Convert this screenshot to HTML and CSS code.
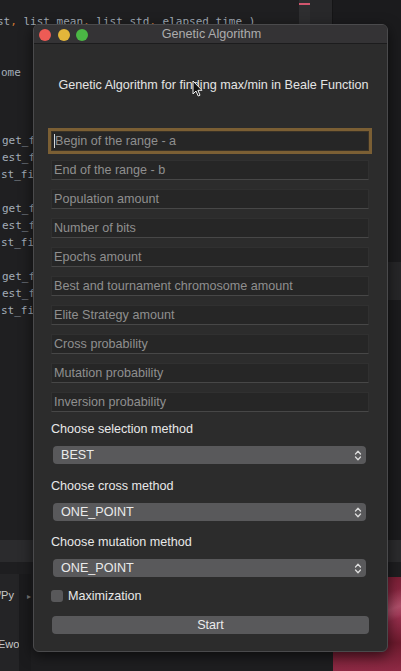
FILE: index.html
```html
<!DOCTYPE html>
<html>
<head>
<meta charset="utf-8">
<title>Genetic Algorithm</title>
<link rel="stylesheet" href="styles.css">
</head>
<body>
<div class="desktop">
  <div class="editor">
    <div class="code">
      <div class="ln l0">st<span class="op">,</span> list_mean<span class="op">,</span> list_std<span class="op">,</span> elapsed_time )</div>
      <div class="ln"></div>
      <div class="ln"></div>
      <div class="ln">ome</div>
      <div class="ln"></div>
      <div class="ln"></div>
      <div class="ln"></div>
      <div class="ln in">get_fitness</div>
      <div class="ln in">est_fitness</div>
      <div class="ln">st_fitness</div>
      <div class="ln"></div>
      <div class="ln in">get_fitness</div>
      <div class="ln in">est_fitness</div>
      <div class="ln">st_fitness</div>
      <div class="ln"></div>
      <div class="ln in">get_fitness</div>
      <div class="ln in">est_fitness</div>
      <div class="ln">st_fitness</div>
    </div>
    <div class="scroll"><div class="mark"></div></div>
    <div class="gutter"></div>
    <div class="side"><div class="side-block"></div></div>
  </div>
  <div class="statusband"></div>
  <div class="bottom">
    <div class="proj">
      <div class="proj-item">/Py</div>
      <div class="proj-item">Ewo</div>
    </div>
    <div class="proj-gap"><span class="tri">▸</span></div>
    <div class="spacer"></div>
    <div class="wallpaper"></div>
  </div>

  <div class="window">
    <div class="titlebar">
      <div class="lights">
        <span class="light red"></span>
        <span class="light yellow"></span>
        <span class="light green"></span>
      </div>
      <div class="title">Genetic Algorithm</div>
    </div>
    <div class="content">
      <div class="heading">Genetic Algorithm for finding max/min in Beale Function</div>
      <div class="fields">
        <div class="field focused"><span class="caret"></span><span class="ph">Begin of the range - a</span></div>
        <div class="field"><span class="ph">End of the range - b</span></div>
        <div class="field"><span class="ph">Population amount</span></div>
        <div class="field"><span class="ph">Number of bits</span></div>
        <div class="field"><span class="ph">Epochs amount</span></div>
        <div class="field"><span class="ph">Best and tournament chromosome amount</span></div>
        <div class="field"><span class="ph">Elite Strategy amount</span></div>
        <div class="field"><span class="ph">Cross probability</span></div>
        <div class="field"><span class="ph">Mutation probability</span></div>
        <div class="field"><span class="ph">Inversion probability</span></div>
      </div>
      <div class="label first">Choose selection method</div>
      <div class="combo">
        <span>BEST</span>
        <svg class="arrows" width="8" height="13" viewBox="0 0 8 13"><path d="M1.5 5 L4 2.3 L6.5 5 M1.5 8 L4 10.7 L6.5 8" fill="none" stroke="#dcdcdc" stroke-width="1.3" stroke-linecap="round" stroke-linejoin="round"/></svg>
      </div>
      <div class="label second">Choose cross method</div>
      <div class="combo">
        <span>ONE_POINT</span>
        <svg class="arrows" width="8" height="13" viewBox="0 0 8 13"><path d="M1.5 5 L4 2.3 L6.5 5 M1.5 8 L4 10.7 L6.5 8" fill="none" stroke="#dcdcdc" stroke-width="1.3" stroke-linecap="round" stroke-linejoin="round"/></svg>
      </div>
      <div class="label third">Choose mutation method</div>
      <div class="combo">
        <span>ONE_POINT</span>
        <svg class="arrows" width="8" height="13" viewBox="0 0 8 13"><path d="M1.5 5 L4 2.3 L6.5 5 M1.5 8 L4 10.7 L6.5 8" fill="none" stroke="#dcdcdc" stroke-width="1.3" stroke-linecap="round" stroke-linejoin="round"/></svg>
      </div>
      <div class="check-row">
        <span class="checkbox"></span>
        <span class="check-label">Maximization</span>
      </div>
      <div class="button">Start</div>
    </div>
    <svg class="cursor" width="12" height="17" viewBox="0 0 12 17"><path d="M1 1 L1 14 L4 11 L6.2 16 L8 15.2 L5.9 10.3 L10 10.3 Z" fill="#111" stroke="#f2f2f2" stroke-width="1" stroke-linejoin="round"/></svg>
  </div>
</div>
</body>
</html>
```

FILE: styles.css
```css
* { box-sizing: border-box; }
html, body { margin: 0; padding: 0; }
body {
  width: 401px;
  height: 671px;
  overflow: hidden;
  background: #1d1d1f;
  font-family: "Liberation Sans", Arial, sans-serif;
}
.desktop {
  position: relative;
  width: 401px;
  height: 671px;
  display: flex;
  flex-direction: column;
}

/* background editor */
.editor {
  height: 540px;
  flex-shrink: 0;
  display: flex;
  background: #1f1f21;
}
.code {
  width: 299px;
  padding-top: 13px;
  overflow: hidden;
  font-family: "DejaVu Sans Mono", monospace;
  font-size: 11px;
  color: #a3adb8;
}
.ln {
  height: 17px;
  line-height: 17px;
  white-space: pre;
  padding-left: 1px;
}
.ln.l0 { margin-left: -4px; }
.ln.in { padding-left: 2px; }
.op { color: #cc7832; }
.scroll {
  width: 11px;
  background: #2e2e30;
  padding-top: 3px;
}
.mark { height: 2px; background: #d2566e; }
.gutter { width: 22px; background: #28282a; }
.side {
  flex: 1;
  background: #1b1b1d;
  padding-top: 262px;
  border-left: 1px solid #151516;
}
.side-block { height: 38px; background: #262628; }

.statusband { height: 22px; flex-shrink: 0; background: #2b2b2d; }
.bottom {
  flex: 1;
  min-height: 0;
  overflow: hidden;
  display: flex;
  background: #1e1e20;
}
.proj {
  width: 19px;
  margin-top: 12px;
  background: #242426;
  overflow: hidden;
  font-size: 11px;
  color: #c8c8c8;
  padding-top: 15px;
  white-space: nowrap;
}
.proj-item { height: 49px; line-height: 13px; margin-left: -2px; }
.proj-gap {
  width: 12px;
  margin-top: 12px;
  background: #1b1b1d;
  font-size: 8px;
  color: #777;
  padding-top: 18px;
  padding-left: 8px;
}
.spacer { flex: 1; }
.wallpaper {
  width: 68px;
  margin-top: 15px;
  background:
    linear-gradient(160deg, rgba(255,255,255,0.0) 30%, rgba(255,180,200,0.25) 45%, rgba(0,0,0,0) 55%),
    linear-gradient(180deg, #7a1f35 0%, #9c3150 40%, #6d1a2d 70%, #8e2a45 100%);
}

/* window */
.window {
  position: absolute;
  left: 33px;
  top: 24px;
  width: 355px;
  height: 628px;
  background: #2c2c2c;
  border: 1px solid #4a4a4c;
  border-radius: 6px;
  overflow: hidden;
  box-shadow: 0 4px 14px rgba(0,0,0,0.6);
}
.titlebar {
  position: relative;
  height: 19px;
  background: #343335;
  border-bottom: 1px solid #1c1c1d;
  display: flex;
  align-items: center;
}
.lights {
  display: flex;
  gap: 6.5px;
  padding-left: 5px;
  padding-top: 1px;
}
.light {
  width: 12px;
  height: 12px;
  border-radius: 50%;
  display: block;
}
.red { background: #ed5b55; }
.yellow { background: #e3b63a; }
.green { background: #4bb745; }
.title {
  position: absolute;
  left: 0; right: 0; top: 0; bottom: 0;
  text-align: center;
  line-height: 19px;
  font-size: 12.6px;
  color: #acacac;
  padding-left: 2px;
}

.content {
  display: flex;
  flex-direction: column;
  padding: 33px 18px 0 17px;
}
.heading {
  height: 16px;
  line-height: 16px;
  font-size: 12.6px;
  color: #e4e4e4;
  text-align: center;
  padding-left: 7px;
  white-space: nowrap;
}
.fields {
  display: flex;
  flex-direction: column;
  gap: 9px;
  margin-top: 38px;
}
.field {
  height: 20px;
  background: #262626;
  border: 1px solid #303030;
  border-bottom-color: #474747;
  display: flex;
  align-items: center;
  padding-left: 2px;
  font-size: 12.6px;
}
.field.focused {
  box-shadow: 0 0 0 3px #7b5f34;
  border-color: #3a3226;
}
.caret {
  width: 1px;
  height: 14px;
  background: #d8d8d8;
}
.ph { color: #8f8f8f; white-space: nowrap; }

.label {
  height: 16px;
  line-height: 16px;
  font-size: 12.6px;
  color: #e8e8e8;
}
.label.first { margin-top: 9px; }
.label.second { margin-top: 14px; }
.label.third { margin-top: 13px; }
.combo {
  height: 18px;
  margin: 9px 3px 0 2px;
  background: #59595b;
  border-radius: 4px;
  display: flex;
  align-items: center;
  justify-content: space-between;
  padding: 0 4px 0 8px;
  font-size: 12.6px;
  color: #ebebeb;
}
.arrows { display: block; }
.check-row {
  height: 16px;
  margin-top: 11px;
  display: flex;
  align-items: center;
  gap: 5px;
}
.checkbox {
  width: 12px;
  height: 12px;
  border-radius: 3px;
  background: #58585a;
  display: block;
}
.check-label { font-size: 12.6px; color: #e8e8e8; }
.button {
  height: 18px;
  margin: 12px 0 0 1px;
  background: #59595b;
  border-radius: 4px;
  text-align: center;
  line-height: 18px;
  font-size: 12.6px;
  color: #ebebeb;
}
.cursor {
  position: absolute;
  left: 158px;
  top: 55px;
}
```
